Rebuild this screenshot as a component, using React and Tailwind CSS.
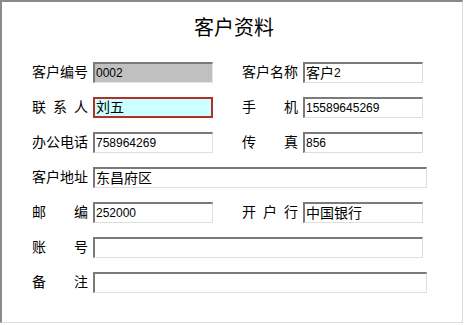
const cjk = /[\u3000-\u9fff\uff00-\uffef]/;

// split a value into runs so Chinese gets 14px and latin/digits 12px
const runs = (text) => {
  const out = [];
  for (const ch of text) {
    const isCjk = cjk.test(ch);
    const last = out[out.length - 1];
    if (last && last.cjk === isCjk) last.text += ch;
    else out.push({ cjk: isCjk, text: ch });
  }
  return out;
};

function Label({ text }) {
  return (
    <div className="w-[56px] flex justify-between text-[14px] leading-[21px] text-black shrink-0">
      {text.split("").map((ch, i) => (
        <span key={i}>{ch}</span>
      ))}
    </div>
  );
}

function Box({ value = "", width = "w-[120px]", variant }) {
  const skin =
    variant === "disabled"
      ? "bg-[#c0c0c0] border-t-2 border-l-2 border-b border-r border-t-[#7a7a7a] border-l-[#7a7a7a] border-b-[#e4e4e4] border-r-[#e4e4e4]"
      : variant === "focus"
      ? "bg-[#ccffff] border-2 border-[#b3302a]"
      : "bg-white border-t-2 border-l-2 border-b border-r border-t-[#7a7a7a] border-l-[#7a7a7a] border-b-[#dedede] border-r-[#dedede]";
  return (
    <div className={`${width} h-[21px] ${skin} flex items-center pl-px overflow-hidden whitespace-nowrap text-black`}>
      {runs(value).map((r, i) => (
        <span key={i} className={r.cjk ? "text-[14px] leading-[17px]" : "text-[12px] leading-[17px]"}>
          {r.text}
        </span>
      ))}
    </div>
  );
}

function Field({ label, value, variant, width }) {
  return (
    <div className="flex items-center">
      <Label text={label} />
      <div className="ml-[5px]">
        <Box value={value} variant={variant} width={width} />
      </div>
    </div>
  );
}

function Row({ left, right }) {
  return (
    <div className="flex items-center h-[21px]">
      <div className="w-[210px]">
        <Field {...left} />
      </div>
      {right && <Field {...right} />}
    </div>
  );
}

export default function App() {
  return (
    <div
      className="w-[465px] h-[325px] bg-white"
      style={{ fontFamily: '"Liberation Sans", "Noto Sans CJK SC", sans-serif' }}
    >
      <div className="w-[463px] h-[323px] border-t-2 border-l-2 border-b border-r border-t-[#8a8a8a] border-l-[#8a8a8a] border-b-[#dcdcdc] border-r-[#dcdcdc]">
        <div className="mt-[16px] h-[20px] leading-[20px] text-center text-[20px] text-black pl-[4px]">
          客户资料
        </div>

        <div className="mt-[24px] pl-[30px] flex flex-col gap-[14px]">
          <Row
            left={{ label: "客户编号", value: "0002", variant: "disabled" }}
            right={{ label: "客户名称", value: "客户2" }}
          />
          <Row
            left={{ label: "联系人", value: "刘五", variant: "focus" }}
            right={{ label: "手机", value: "15589645269" }}
          />
          <Row
            left={{ label: "办公电话", value: "758964269" }}
            right={{ label: "传真", value: "856" }}
          />
          <div className="flex items-center h-[21px]">
            <Field label="客户地址" value="东昌府区" width="w-[334px]" />
          </div>
          <Row
            left={{ label: "邮编", value: "252000" }}
            right={{ label: "开户行", value: "中国银行" }}
          />
          <div className="flex items-center h-[21px]">
            <Field label="账号" value="" width="w-[330px]" />
          </div>
          <div className="flex items-center h-[21px]">
            <Field label="备注" value="" width="w-[334px]" />
          </div>
        </div>
      </div>
    </div>
  );
}
